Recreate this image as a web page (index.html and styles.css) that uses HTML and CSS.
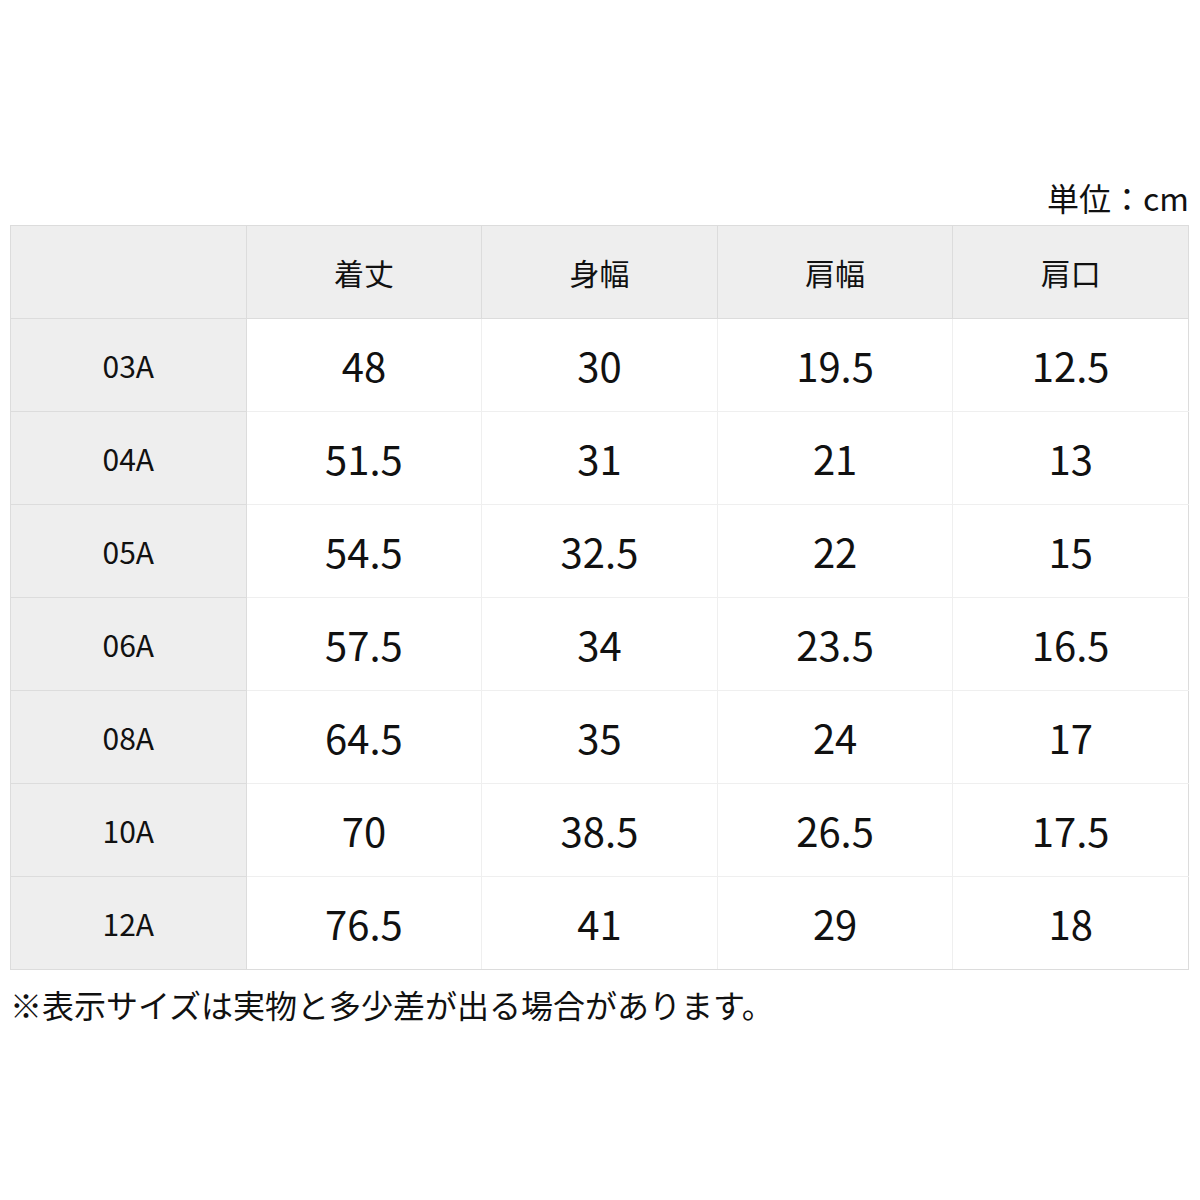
FILE: index.html
```html
<!DOCTYPE html>
<html lang="ja">
<head>
<meta charset="utf-8">
<link rel="stylesheet" href="styles.css">
</head>
<body>
<div class="page">
  <div class="unit">単位：cm</div>
  <table class="size">
    <thead>
      <tr><th class="corner"></th><th>着丈</th><th>身幅</th><th>肩幅</th><th>肩口</th></tr>
    </thead>
    <tbody>
      <tr><th>03A</th><td>48</td><td>30</td><td>19.5</td><td>12.5</td></tr>
      <tr><th>04A</th><td>51.5</td><td>31</td><td>21</td><td>13</td></tr>
      <tr><th>05A</th><td>54.5</td><td>32.5</td><td>22</td><td>15</td></tr>
      <tr><th>06A</th><td>57.5</td><td>34</td><td>23.5</td><td>16.5</td></tr>
      <tr><th>08A</th><td>64.5</td><td>35</td><td>24</td><td>17</td></tr>
      <tr><th>10A</th><td>70</td><td>38.5</td><td>26.5</td><td>17.5</td></tr>
      <tr><th>12A</th><td>76.5</td><td>41</td><td>29</td><td>18</td></tr>
    </tbody>
  </table>
  <p class="note">※表示サイズは実物と多少差が出る場合があります。</p>
</div>
</body>
</html>
```
FILE: styles.css
```css
html, body {
  margin: 0;
  padding: 0;
  background: #ffffff;
}
body {
  font-family: "Noto Sans CJK JP", "Noto Sans", sans-serif;
  color: #111111;
}
.page {
  width: 1179px;
  margin-left: 10px;
  padding-top: 177px;
}
.unit {
  text-align: right;
  font-size: 32px;
  line-height: 40px;
  height: 40px;
  margin-bottom: 8px;
}
.size {
  width: 1179px;
  border-collapse: collapse;
  table-layout: fixed;
}
.size th,
.size td {
  height: 92px;
  padding: 0;
  text-align: center;
  vertical-align: middle;
  font-weight: 400;
}
.size thead th {
  background: #eeeeee;
  border: 1px solid #dcdcdc;
  font-size: 30px;
}
.size tbody th {
  background: #eeeeee;
  border: 1px solid #dcdcdc;
  font-size: 30px;
}
.size td {
  border: 1px solid #efefef;
  font-size: 40px;
}
.size tbody tr:last-child td {
  border-bottom-color: #dcdcdc;
}
.size tbody td:last-child {
  border-right-color: #dcdcdc;
}
.note {
  margin: 12px 0 0 0;
  font-size: 32px;
  line-height: 44px;
}
```
